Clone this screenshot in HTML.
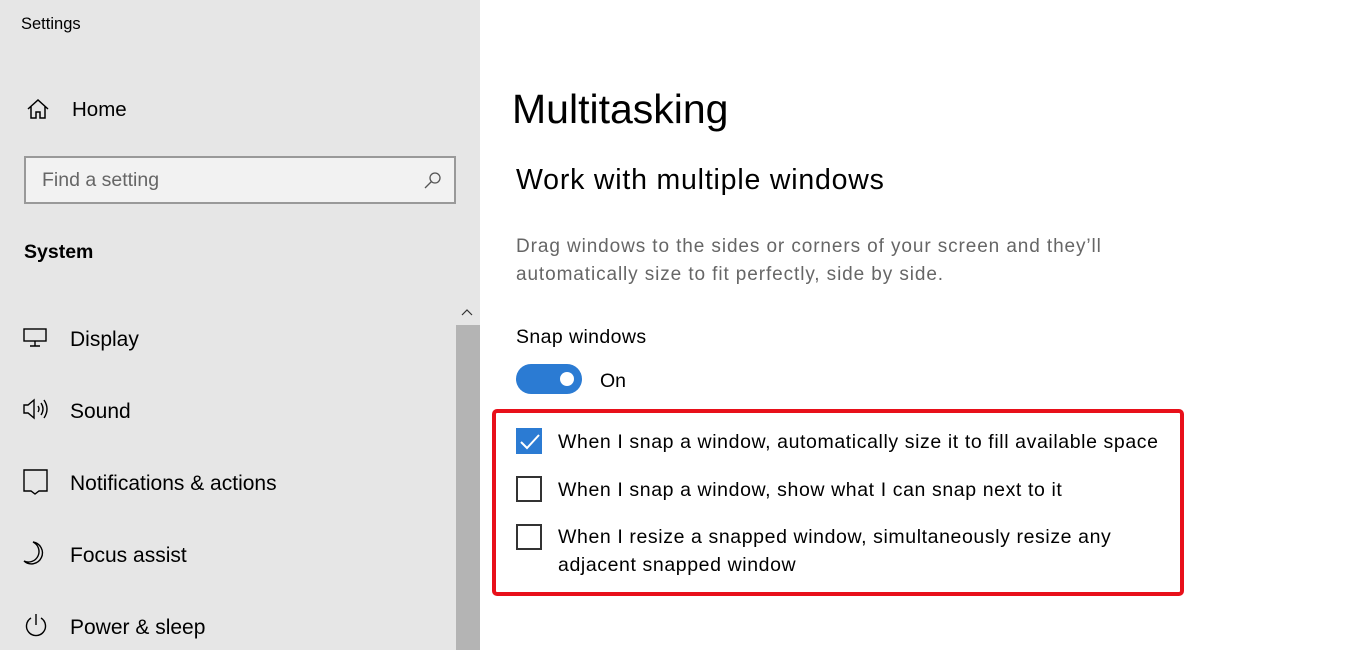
<!DOCTYPE html>
<html><head><meta charset="utf-8"><style>
body{margin:0;width:1356px;height:650px;overflow:hidden;background:#fff;font-family:"Liberation Sans",sans-serif;color:#000;position:relative}
.side{position:absolute;left:0;top:0;width:480px;height:650px;background:#e6e6e6}
.t{position:absolute;white-space:nowrap}
svg{position:absolute}
.cb{position:absolute;left:516px;width:26px;height:26px;border:2px solid #333;box-sizing:border-box}
.m{font-size:19.5px;letter-spacing:0.6px}
</style></head><body>
<div class="side">
<div class="t" style="left:21px;top:15px;font-size:16.5px">Settings</div>
<svg style="left:26px;top:98px" width="24" height="22" viewBox="0 0 24 22" fill="none" stroke="#000" stroke-width="1.5"><path d="M2 11L12 2l10 9M5 8v12h5v-6h4v6h5V8"/></svg>
<div class="t" style="left:72px;top:98px;font-size:20.5px">Home</div>
<div style="position:absolute;left:24px;top:156px;width:432px;height:48px;border:2px solid #999;box-sizing:border-box;background:#f2f2f2"></div>
<div class="t" style="left:42px;top:169px;font-size:19.5px;color:#666">Find a setting</div>
<svg style="left:423px;top:171px" width="20" height="20" viewBox="0 0 20 20" fill="none" stroke="#555" stroke-width="1.3"><circle cx="12" cy="7" r="5"/><path d="M8.5 10.5L2 17"/></svg>
<div class="t" style="left:24px;top:241px;font-size:19.5px;font-weight:bold">System</div>
<div style="position:absolute;left:456px;top:325px;width:24px;height:325px;background:#b4b4b4"></div>
<svg style="left:461px;top:308px" width="12" height="8" viewBox="0 0 12 8" fill="none" stroke="#333" stroke-width="1.2"><path d="M1 7l5-5 5 5"/></svg>
<svg style="left:23px;top:328px" width="24" height="20" viewBox="0 0 24 20" fill="none" stroke="#000" stroke-width="1.4"><rect x="1" y="1" width="22" height="12"/><path d="M12 13v5M7 18h10"/></svg>
<div class="t" style="left:70px;top:328px;font-size:21px">Display</div>
<svg style="left:23px;top:398px" width="26" height="22" viewBox="0 0 26 22" fill="none" stroke="#000" stroke-width="1.4"><path d="M1 7h4l6-5v18l-6-5H1z"/><path d="M15 8q2 3 0 6M18 5q4 6 0 12M21 2q6 9 0 18"/></svg>
<div class="t" style="left:70px;top:400px;font-size:21px">Sound</div>
<svg style="left:23px;top:469px" width="26" height="26" viewBox="0 0 26 26" fill="none" stroke="#000" stroke-width="1.4"><path d="M1 1h23v21H16l-4 3-4-3H1z"/></svg>
<div class="t" style="left:70px;top:472px;font-size:21px">Notifications &amp; actions</div>
<svg style="left:23px;top:540px" width="26" height="26" viewBox="0 0 26 26" fill="none" stroke="#000" stroke-width="1.4"><path d="M10 2a11 11 0 1 1-9 19a10 10 0 0 0 9-19z"/></svg>
<div class="t" style="left:70px;top:544px;font-size:21px">Focus assist</div>
<svg style="left:24px;top:612px" width="24" height="26" viewBox="0 0 24 26" fill="none" stroke="#000" stroke-width="1.4"><path d="M12 2v11"/><path d="M7 6a9.5 9.5 0 1 0 10 0"/></svg>
<div class="t" style="left:70px;top:616px;font-size:21px">Power &amp; sleep</div>
</div>
<div class="t" style="left:512px;top:86px;font-size:41px">Multitasking</div>
<div class="t" style="left:516px;top:164px;font-size:28.5px;letter-spacing:0.8px">Work with multiple windows</div>
<div class="t" style="left:516px;top:233px;font-size:19px;letter-spacing:0.9px;color:#666;line-height:28px">Drag windows to the sides or corners of your screen and they’ll<br>automatically size to fit perfectly, side by side.</div>
<div class="t" style="left:516px;top:326px;font-size:19.5px;letter-spacing:0.4px">Snap windows</div>
<div style="position:absolute;left:516px;top:364px;width:66px;height:30px;border-radius:15px;background:#2b7bd3"></div>
<div style="position:absolute;left:560px;top:372px;width:14px;height:14px;border-radius:7px;background:#fff"></div>
<div class="t" style="left:600px;top:370px;font-size:19.5px">On</div>
<div style="position:absolute;left:492px;top:409px;width:692px;height:187px;border:4px solid #e8101a;border-radius:5px;box-sizing:border-box"></div>
<div class="cb" style="top:428px;background:#2b7bd3;border-color:#2b7bd3"></div>
<svg style="left:518px;top:430px" width="24" height="24" viewBox="0 0 24 24" fill="none" stroke="#fff" stroke-width="2"><path d="M3 12l6 6L21 5"/></svg>
<div class="t m" style="left:558px;top:431px">When I snap a window, automatically size it to fill available space</div>
<div class="cb" style="top:476px"></div>
<div class="t m" style="left:558px;top:479px">When I snap a window, show what I can snap next to it</div>
<div class="cb" style="top:524px"></div>
<div class="t m" style="left:558px;top:523px;line-height:28px">When I resize a snapped window, simultaneously resize any<br>adjacent snapped window</div>
</body></html>
